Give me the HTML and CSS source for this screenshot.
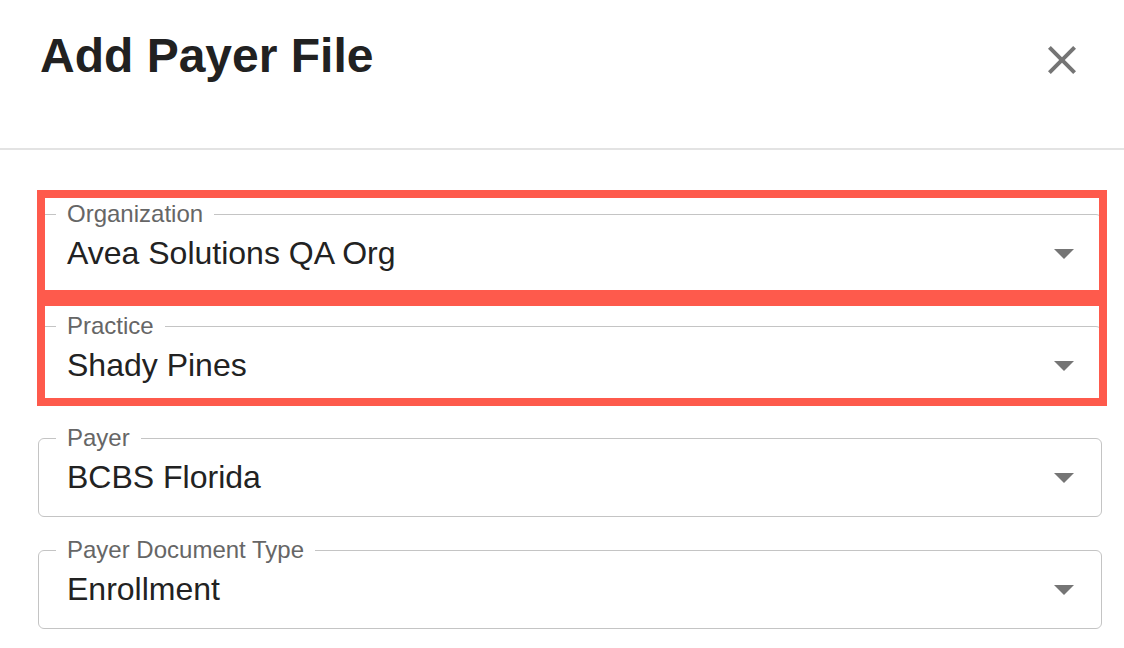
FILE: index.html
```html
<!DOCTYPE html>
<html lang="en">
<head>
    <meta charset="utf-8">
    <meta name="viewport" content="width=device-width,initial-scale=1.0">
    <link rel="stylesheet" href="styles.css">
</head>
<body>
    <div class="dialog-header">
        <h1 class="dialog-title">Add Payer File</h1>
        <button class="close-btn" type="button" aria-label="Close">
            <svg width="48" height="48" viewBox="0 0 24 24"><path fill="#757575" d="M19 6.41 17.59 5 12 10.59 6.41 5 5 6.41 10.59 12 5 17.59 6.41 19 12 13.41 17.59 19 19 17.59 13.41 12z"/></svg>
        </button>
    </div>

    <form class="dialog-form">
        <fieldset class="field">
            <legend>Organization</legend>
            <div class="field-row">
                <span class="field-value">Avea Solutions QA Org</span>
                <svg class="arrow" width="20" height="10" viewBox="7 10 10 5"><path fill="#757575" d="M7 10l5 5 5-5z"/></svg>
            </div>
        </fieldset>
        <fieldset class="field">
            <legend>Practice</legend>
            <div class="field-row">
                <span class="field-value">Shady Pines</span>
                <svg class="arrow" width="20" height="10" viewBox="7 10 10 5"><path fill="#757575" d="M7 10l5 5 5-5z"/></svg>
            </div>
        </fieldset>
        <fieldset class="field">
            <legend>Payer</legend>
            <div class="field-row">
                <span class="field-value">BCBS Florida</span>
                <svg class="arrow" width="20" height="10" viewBox="7 10 10 5"><path fill="#757575" d="M7 10l5 5 5-5z"/></svg>
            </div>
        </fieldset>
        <fieldset class="field">
            <legend>Payer Document Type</legend>
            <div class="field-row">
                <span class="field-value">Enrollment</span>
                <svg class="arrow" width="20" height="10" viewBox="7 10 10 5"><path fill="#757575" d="M7 10l5 5 5-5z"/></svg>
            </div>
        </fieldset>

        <!-- review highlights -->
        <div class="highlight highlight-org"></div>
        <div class="highlight highlight-practice"></div>
    </form>
</body>
</html>
```

FILE: styles.css
```css
body {margin: 0; background: #fff; font-family: "Liberation Sans", Arial, sans-serif; color: rgba(0,0,0,0.87);}

.dialog-header {display: flex; justify-content: space-between; align-items: flex-start; height: 148px; padding: 0 38px 0 40px; border-bottom: 2px solid #e3e3e3;}
.dialog-title {margin: 28px 0 0; font-size: 48px; line-height: 56px; font-weight: 700; color: #212121;}
.close-btn {margin-top: 36px; padding: 0; border: 0; background: none; width: 48px; height: 48px; cursor: pointer;}
.close-btn svg {display: block;}

.dialog-form {position: relative; display: flex; flex-direction: column; gap: 21px; padding: 52px 22px 0 38px;}

.field {margin: 0; min-width: 0; padding: 0 27px 23px 28px; border: 1px solid #c4c4c4; border-radius: 6px;}
.field legend {margin-left: -11px; padding: 0 11px; font-size: 24px; line-height: 24px; color: #666;}
.field-row {display: flex; align-items: center; justify-content: space-between; margin-top: 11px; height: 32px;}
.field-value {font-size: 32px; line-height: 32px; color: #222;}
.arrow {display: block; margin-top: 2px;}

.highlight {position: absolute; left: 37px; width: 1054px; height: 92px; border: 8px solid #fe5a4c; pointer-events: none;}
.highlight-org {top: 40px;}
.highlight-practice {top: 148px;}
```
